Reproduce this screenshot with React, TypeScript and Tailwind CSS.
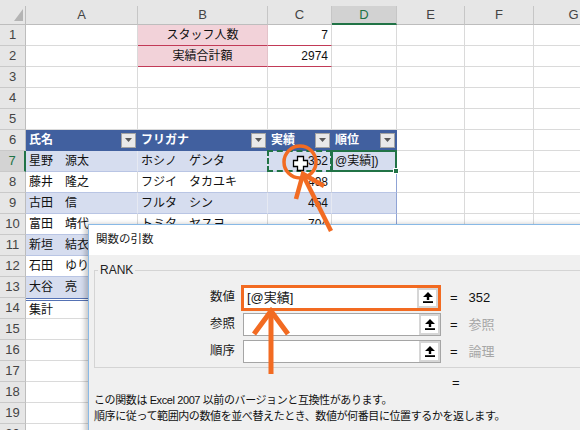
import React from 'react';

const widths = ['w-[112px]', 'w-[130px]', 'w-[64px]', 'w-[65px]', 'w-[68px]', 'w-[69px]', 'w-[80px]'];
const letters = ['A', 'B', 'C', 'D', 'E', 'F', 'G'];

// rows 7..13 of the staff table
const people = [
  ['星野　源太', 'ホシノ　ゲンタ', '352', '@実績])'],
  ['藤井　隆之', 'フジイ　タカユキ', '498', ''],
  ['古田　信', 'フルタ　シン', '454', ''],
  ['富田　靖代', 'トミタ　ヤスヨ', '704', ''],
  ['新垣　結衣', 'アラガキ　ユイ', '512', ''],
  ['石田　ゆり子', 'イシダ　ユリコ', '287', ''],
  ['大谷　亮', 'オオタニ　リョウ', '197', ''],
];
const headers = ['氏名', 'フリガナ', '実績', '順位'];

const base = 'relative flex h-full shrink-0 items-center whitespace-nowrap border-r border-b px-[3px]';

function FilterButton() {
  return (
    <div className="flex h-[15px] w-[15px] shrink-0 items-center justify-center border border-[#a3a3a3] bg-[#e9e9e9]">
      <svg width="7" height="4" viewBox="0 0 7 4">
        <path d="M0 0h7L3.5 4z" fill="#595959" />
      </svg>
    </div>
  );
}

function getCell(r: number, c: number): { cls: string; content: React.ReactNode } {
  const plain = 'border-r-[#dadada] border-b-[#dadada] bg-white';
  if ((r === 1 || r === 2) && c === 1) {
    return {
      cls: 'justify-center bg-[#f2d2d9] border-r-[#e3c3ca] border-b-[#c23a57]',
      content: r === 1 ? 'スタッフ人数' : '実績合計額',
    };
  }
  if ((r === 1 || r === 2) && c === 2) {
    return { cls: 'justify-end bg-white border-r-[#dadada] border-b-[#c23a57]', content: r === 1 ? '7' : '2974' };
  }
  if (r === 6 && c < 4) {
    return {
      cls: 'justify-between bg-[#41609f] border-r-[#41609f] border-b-[#41609f] pr-px font-bold text-white',
      content: (
        <>
          <span>{headers[c]}</span>
          <FilterButton />
        </>
      ),
    };
  }
  if (r >= 7 && r <= 13 && c < 4) {
    const band = r % 2 === 1;
    const row = people[r - 7];
    const bg = band ? 'bg-[#d6ddef]' : 'bg-white';
    const right = c === 3 ? 'border-r-[#8fa3d5]' : band ? 'border-r-[#e6e9f2]' : 'border-r-[#dadada]';
    const bottom = r === 13 ? 'border-b-[#d6ddef]' : 'border-b-[#b9c5e4]';
    let extra: React.ReactNode = null;
    if (r === 7 && c === 2) {
      extra = <div className="pointer-events-none absolute -inset-px z-10 border-2 border-dashed border-[#217346]" />;
    }
    if (r === 7 && c === 3) {
      extra = (
        <div className="pointer-events-none absolute -inset-px z-10 border-2 border-[#217346]">
          <div className="absolute -right-[4px] -bottom-[4px] h-[6px] w-[6px] border border-white bg-[#217346]" />
        </div>
      );
    }
    return {
      cls: `${bg} ${right} ${bottom} ${c === 2 ? 'justify-end' : ''}`,
      content: (
        <>
          {row[c]}
          {extra}
        </>
      ),
    };
  }
  if (r === 14 && c < 4) {
    return {
      cls: `bg-white border-t-[3px] border-double border-t-[#5572b4] border-b-[#dadada] ${
        c === 3 ? 'border-r-[#8fa3d5]' : 'border-r-[#dadada]'
      }`,
      content: c === 0 ? '集計' : '',
    };
  }
  return { cls: plain, content: '' };
}

function UpArrow() {
  return (
    <div className="flex h-full w-[21px] shrink-0 items-center justify-center bg-[#d6d6d6] p-[2px]">
      <div className="flex h-full w-full items-center justify-center bg-white">
        <svg width="10" height="11" viewBox="0 0 10 11">
          <path d="M5 0L10 5H6.2V8H3.8V5H0z" fill="#000" />
          <rect x="0" y="9.2" width="10" height="1.8" fill="#000" />
        </svg>
      </div>
    </div>
  );
}

function ArgRow({
  label,
  value,
  result,
  active,
}: {
  label: string;
  value: string;
  result: string;
  active?: boolean;
}) {
  return (
    <div className="flex h-[27px] items-center">
      <div className="w-[140px] text-right text-[12.5px] text-[#1a1a1a]">{label}</div>
      <div className="ml-[6px] flex w-[200px] items-center">
        {active ? (
          <div className="flex h-[26px] w-[200px] items-center border-[3px] border-[#f26b22] bg-white">
            <div className="flex-1 pl-[3px] text-[13px] text-[#111]">{value}</div>
            <UpArrow />
          </div>
        ) : (
          <div className="ml-[2px] flex h-[23px] w-[198px] items-center border border-[#a5a5a5] bg-white">
            <div className="flex-1 pl-[3px] text-[13px]">{value}</div>
            <UpArrow />
          </div>
        )}
      </div>
      <div className="ml-[9px] text-[13px] text-[#111]">=</div>
      <div className={`ml-[11px] text-[13px] ${active ? 'text-[#111]' : 'text-[#a6a6a6]'}`}>{result}</div>
    </div>
  );
}

function Dialog() {
  return (
    <div className="absolute top-[224px] left-[88px] z-20 h-[215px] w-[520px] border border-[#88b9e6] bg-[#f0f0f0] shadow-[-3px_0_5px_rgba(0,0,0,0.22)] font-['Liberation_Sans','Noto_Sans_CJK_JP',sans-serif]">
      <div className="flex h-[30px] items-center bg-white pl-[7px] text-[11.5px] text-[#222]">関数の引数</div>
      <div className="px-[5px] pt-[6px]">
        <fieldset className="mr-[20px] border border-[#d4d4d4] pb-[2px]">
          <legend className="ml-[3px] px-[2px] text-[12px] leading-[18px] text-[#222]">RANK</legend>
          <div className="pt-[5px]">
            <ArgRow label="数値" value="[@実績]" result="352" active />
            <ArgRow label="参照" value="" result="参照" />
            <ArgRow label="順序" value="" result="論理" />
          </div>
        </fieldset>
        <div className="mt-[7px] pl-[358px] text-[13px] leading-[16px] text-[#111]">=</div>
        <div className="mt-px text-[11px] leading-[16px] tracking-[-0.4px] text-[#111]">
          <div>この関数は Excel 2007 以前のバージョンと互換性があります。</div>
          <div>順序に従って範囲内の数値を並べ替えたとき、数値が何番目に位置するかを返します。</div>
        </div>
      </div>
    </div>
  );
}

function Marks() {
  const orange = '#f26b22';
  return (
    <svg className="pointer-events-none absolute inset-0 z-30" width="580" height="430" viewBox="0 0 580 430">
      {/* excel cell cursor */}
      <path
        d="M297.5 156.5h6v4h4v6h-4v4h-6v-4h-4v-6h4z"
        fill="#fff"
        stroke="#000"
        strokeWidth="1.3"
      />
      <circle cx="300" cy="162" r="16" fill="none" stroke={orange} strokeWidth="3.5" />
      <line x1="331" y1="231" x2="303" y2="175" stroke={orange} strokeWidth="4.5" />
      <polyline points="296,199 303,174 324,186" fill="none" stroke={orange} strokeWidth="4.5" />
      <line x1="271" y1="374" x2="271" y2="312" stroke={orange} strokeWidth="5" />
      <polyline points="254,334 271,311 288,334" fill="none" stroke={orange} strokeWidth="5" />
    </svg>
  );
}

export default function App() {
  const rows = Array.from({ length: 20 }, (_, i) => i + 1);
  return (
    <div className="relative h-[430px] w-[580px] overflow-hidden bg-white font-['Liberation_Sans','Noto_Sans_CJK_JP',sans-serif] text-[12px] text-[#111]">
      {/* column headers */}
      <div className="h-[6px] bg-[#e6e6e6]" />
      <div className="flex h-[19px]">
        <div className="relative w-[26px] shrink-0 border-r border-b border-r-[#bdbdbd] border-b-[#bdbdbd] bg-[#e6e6e6]">
          <svg className="absolute top-[3px] left-[14px]" width="9" height="12" viewBox="0 0 9 12">
            <path d="M9 0V12H0z" fill="#b4b4b4" />
          </svg>
        </div>
        {letters.map((l, c) => (
          <div
            key={l}
            className={`${widths[c]} flex shrink-0 items-center justify-center border-r border-r-[#c6c6c6] text-[13px] ${
              c === 3
                ? 'border-b-2 border-b-[#217346] bg-[#d2d2d2] text-[#217346]'
                : 'border-b border-b-[#bdbdbd] bg-[#e6e6e6] text-[#444]'
            }`}
          >
            {l}
          </div>
        ))}
      </div>

      {/* grid */}
      {rows.map((r) => (
        <div key={r} className="flex h-[21px]">
          <div
            className={`flex w-[26px] shrink-0 items-center justify-center border-b border-b-[#c9c9c9] text-[13px] ${
              r === 7
                ? 'border-r-2 border-r-[#217346] bg-[#d3d3d3] text-[#217346]'
                : 'border-r border-r-[#bdbdbd] bg-[#e6e6e6] text-[#444]'
            }`}
          >
            {r}
          </div>
          {letters.map((l, c) => {
            const cell = getCell(r, c);
            return (
              <div key={l} className={`${base} ${widths[c]} ${cell.cls}`}>
                {cell.content}
              </div>
            );
          })}
        </div>
      ))}

      <Dialog />
      <Marks />
    </div>
  );
}
